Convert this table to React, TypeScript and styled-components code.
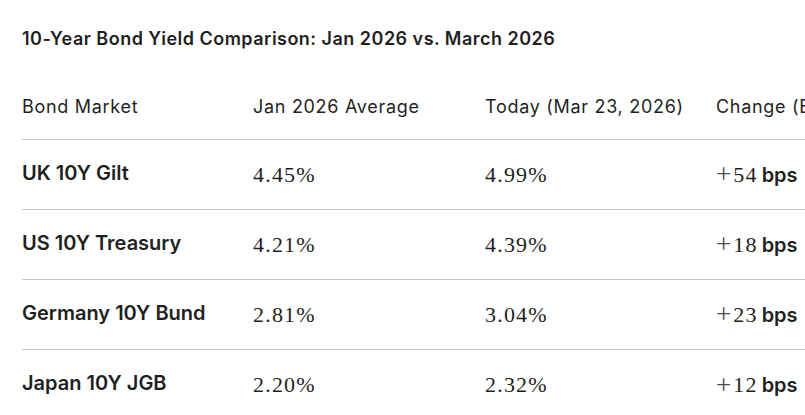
import React from "react";
import styled, { createGlobalStyle } from "styled-components";

const Global = createGlobalStyle`
  html, body { margin: 0; padding: 0; background: #ffffff; overflow: hidden; }
  body { font-family: Inter, "Noto Sans", sans-serif; color: #1f1f1f; }
`;

const Page = styled.div`
  padding: 27px 0 0 22px;
  width: 1000px;
`;

const Title = styled.h2`
  margin: 0;
  font-size: 18px;
  line-height: 24px;
  font-weight: 600;
  letter-spacing: 0.48px;
  color: #1f1f1f;
`;

const Table = styled.div`
  margin-top: 21px;
  display: grid;
  grid-template-columns: 231px 232px 231px 280px;
`;

const HeadCell = styled.div`
  height: 68px;
  padding-top: 1px;
  box-sizing: border-box;
  display: flex;
  align-items: center;
  font-size: 18px;
  font-weight: 400;
  letter-spacing: 0.7px;
  border-bottom: 1px solid #c7c7c7;
  white-space: nowrap;
`;

const Cell = styled.div<{ $last?: boolean; $lift?: boolean }>`
  height: 70px;
  box-sizing: border-box;
  padding-bottom: ${(p) => (p.$lift ? "4px" : "0")};
  display: flex;
  align-items: center;
  border-bottom: ${(p) => (p.$last ? "none" : "1px solid #c7c7c7")};
  white-space: nowrap;
`;

const Label = styled.span`
  font-size: 20px;
  font-weight: 600;
`;

const Num = styled.span`
  font-family: "Liberation Serif", "Times New Roman", serif;
  font-size: 22px;
  letter-spacing: 1.2px;
  color: #1f1f1f;
`;

const Plus = styled.span`
  font-family: "Liberation Serif", serif;
  font-size: 27px;
  line-height: 1;
  color: #4a4a4a;
  margin-right: 2px;
`;

const Unit = styled.span`
  font-size: 20px;
  font-weight: 600;
  margin-left: 4px;
`;

const rows = [
  { name: "UK 10Y Gilt", jan: "4.45%", today: "4.99%", change: "54" },
  { name: "US 10Y Treasury", jan: "4.21%", today: "4.39%", change: "18" },
  { name: "Germany 10Y Bund", jan: "2.81%", today: "3.04%", change: "23" },
  { name: "Japan 10Y JGB", jan: "2.20%", today: "2.32%", change: "12" },
];

export default function App() {
  return (
    <Page>
      <Global />
      <Title>10-Year Bond Yield Comparison: Jan 2026 vs. March 2026</Title>
      <Table>
        <HeadCell>Bond Market</HeadCell>
        <HeadCell>Jan 2026 Average</HeadCell>
        <HeadCell>Today (Mar 23, 2026)</HeadCell>
        <HeadCell>Change (Basis Points)</HeadCell>
        {rows.map((r, i) => {
          const last = i === rows.length - 1;
          return (
            <React.Fragment key={r.name}>
              <Cell $last={last} $lift>
                <Label>{r.name}</Label>
              </Cell>
              <Cell $last={last}>
                <Num>{r.jan}</Num>
              </Cell>
              <Cell $last={last}>
                <Num>{r.today}</Num>
              </Cell>
              <Cell $last={last}>
                <Plus>+</Plus>
                <Num>{r.change}</Num>
                <Unit>bps</Unit>
              </Cell>
            </React.Fragment>
          );
        })}
      </Table>
    </Page>
  );
}
